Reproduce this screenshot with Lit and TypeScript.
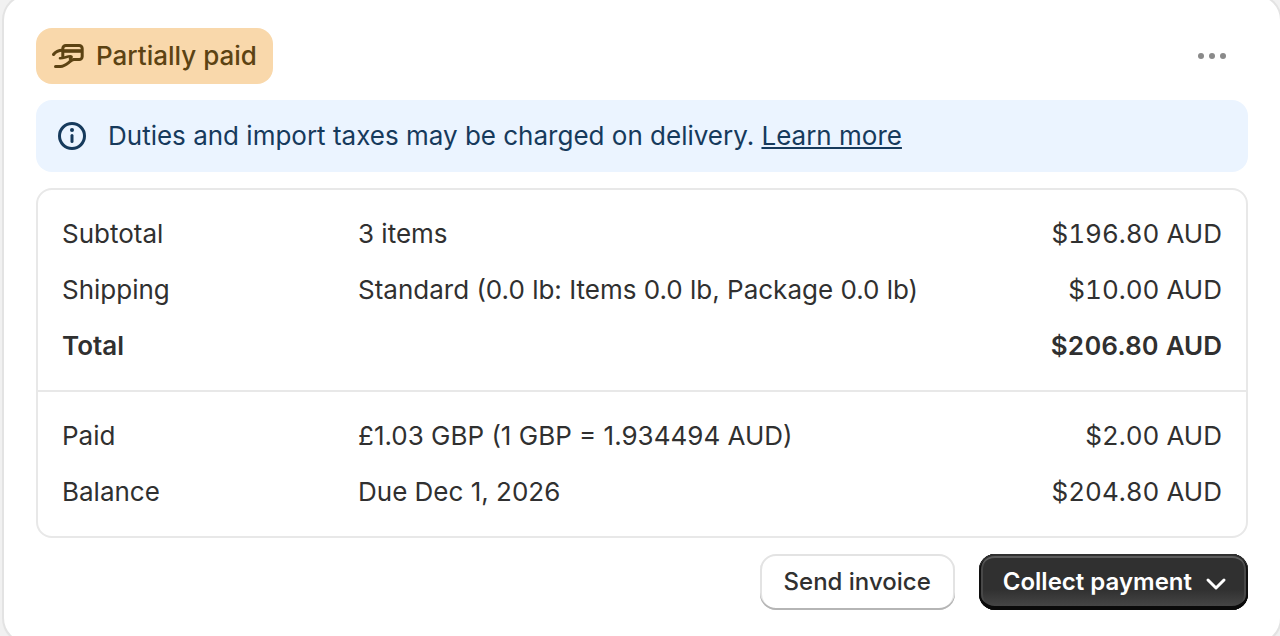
import { LitElement, html, css, svg } from "lit";
import { customElement } from "lit/decorators.js";

interface Line {
  label: string;
  detail: string;
  amount: string;
  strong?: boolean;
}

const groups: Line[][] = [
  [
    { label: "Subtotal", detail: "3 items", amount: "$196.80 AUD" },
    {
      label: "Shipping",
      detail: "Standard (0.0 lb: Items 0.0 lb, Package 0.0 lb)",
      amount: "$10.00 AUD",
    },
    { label: "Total", detail: "", amount: "$206.80 AUD", strong: true },
  ],
  [
    {
      label: "Paid",
      detail: "£1.03 GBP (1 GBP = 1.934494 AUD)",
      amount: "$2.00 AUD",
    },
    { label: "Balance", detail: "Due Dec 1, 2026", amount: "$204.80 AUD" },
  ],
];

const handCard = svg`
  <path d="M14.800 20.500V12.500a3 3 0 0 1 3-3h13.400a3 3 0 0 1 3 3v8a3 3 0 0 1-3 3h-5.700" />
  <path d="M15 15h19" stroke-width="3.600" stroke-linecap="butt" />
  <path d="M5.500 18.500C7.500 15.800 9.500 14.300 14.500 14.300" />
  <path d="M12 22.300c4.500 0 6-1.600 10.500-2 1.500 0 1.500 1.200-.5 2.500" stroke-width="2.600" />
  <path d="M7.500 30.500h5c3.500 0 6-2 8.200-3.800 1.800-1.500 3-3.200 5.300-3.200" />`;

@customElement("app-root")
export class AppRoot extends LitElement {
  static styles = css`
    :host {
      display: block;
      height: 100vh;
      overflow: hidden;
      background: #f1f1f1;
      color: #303030;
      font: 400 26px/40px Inter, "Liberation Sans", sans-serif;
    }
    * {
      box-sizing: border-box;
    }
    .card {
      display: flex;
      flex-direction: column;
      gap: 16px;
      margin: -4px 0 0 4px;
      padding: 32px;
      border-radius: 24px;
      background: #fff;
      box-shadow: 0 0 0 2px #e3e3e3, 0 2px 2px #c8c8c8;
    }
    .head {
      display: flex;
      align-items: center;
      justify-content: space-between;
    }
    .badge {
      display: flex;
      gap: 8px;
      padding: 8px 16px 8px 12px;
      border-radius: 16px;
      background: #f9d8ab;
      color: #5c4313;
      font-weight: 500;
    }
    svg {
      display: block;
      flex: none;
      fill: none;
      stroke: currentColor;
      stroke-width: 3;
      stroke-linecap: round;
      stroke-linejoin: round;
    }
    button {
      margin: 0;
      border: 0;
      background: none;
      color: inherit;
      font: inherit;
      cursor: pointer;
    }
    .more {
      padding: 8px 16px;
      color: #8a8a8a;
    }
    .more svg {
      fill: currentColor;
      stroke: none;
    }
    .banner {
      display: flex;
      gap: 16px;
      padding: 16px;
      border-radius: 16px;
      background: #ebf4ff;
      color: #163a5c;
    }
    .banner p {
      margin: 0;
    }
    .banner a {
      color: inherit;
      text-decoration: underline;
    }
    .totals {
      width: 100%;
      border: 2px solid #e8e8e8;
      border-radius: 16px;
      border-spacing: 0;
    }
    .totals th,
    .totals td {
      padding: 8px 24px 8px 0;
      font-weight: 400;
      text-align: left;
      vertical-align: top;
    }
    .totals th {
      width: 320px;
      padding-left: 24px;
    }
    .totals .amount {
      font-variant-numeric: tabular-nums;
      text-align: right;
      white-space: nowrap;
    }
    .totals tr:first-child > * {
      padding-top: 24px;
    }
    .totals tr:last-child > * {
      padding-bottom: 24px;
    }
    .totals tbody + tbody tr:first-child > * {
      border-top: 2px solid #e8e8e8;
    }
    .totals .strong > * {
      font-weight: 600;
    }
    .actions {
      display: flex;
      justify-content: flex-end;
      gap: 24px;
    }
    .button {
      display: flex;
      align-items: center;
      padding: 8px 24px;
      border-radius: 16px;
      font-size: 24px;
      font-weight: 500;
    }
    .secondary {
      background: #fff;
      box-shadow: inset 0 -2px 0 #b5b5b5, inset 0 0 0 2px #e3e3e3;
    }
    .primary {
      gap: 4px;
      padding-right: 12px;
      background: linear-gradient(#303030 63%, #4a4a4a);
      color: #fff;
      font-weight: 600;
      box-shadow: inset 0 2px 0 #303030, inset 0 -4px 0 #0a0a0a,
        inset 2px 0 0 #101010, inset -2px 0 0 #101010, inset 0 4px 0 #5c5c5c,
        inset 4px 0 0 #484848, inset -4px 0 0 #484848;
    }
  `;

  render() {
    return html`
      <section class="card">
        <header class="head">
          <span class="badge">
            <svg width="40" height="40" viewBox="0 0 40 40" aria-hidden="true">
              ${handCard}
            </svg>
            Partially paid
          </span>
          <button class="more" type="button" aria-label="More actions">
            <svg width="40" height="40" viewBox="0 0 40 40" aria-hidden="true">
              <circle cx="9" cy="20" r="3" />
              <circle cx="20" cy="20" r="3" />
              <circle cx="31" cy="20" r="3" />
            </svg>
          </button>
        </header>
        <div class="banner">
          <svg width="40" height="40" viewBox="0 0 40 40" aria-hidden="true">
            <circle cx="20" cy="20" r="12.5" />
            <path d="M20 19.500v6" />
            <circle cx="20" cy="14" r="2" fill="currentColor" stroke="none" />
          </svg>
          <p>
            Duties and import taxes may be charged on delivery.
            <a href="#">Learn more</a>
          </p>
        </div>
        <table class="totals">
          ${groups.map(
            (lines) => html`<tbody>
              ${lines.map(
                (line) => html`<tr class=${line.strong ? "strong" : ""}>
                  <th scope="row">${line.label}</th>
                  <td>${line.detail}</td>
                  <td class="amount">${line.amount}</td>
                </tr>`
              )}
            </tbody>`
          )}
        </table>
        <div class="actions">
          <button class="button secondary" type="button">Send invoice</button>
          <button class="button primary" type="button">
            Collect payment
            <svg width="40" height="40" viewBox="0 0 40 40" aria-hidden="true">
              <path d="M12 18l8 8l8-8" />
            </svg>
          </button>
        </div>
      </section>
    `;
  }
}
